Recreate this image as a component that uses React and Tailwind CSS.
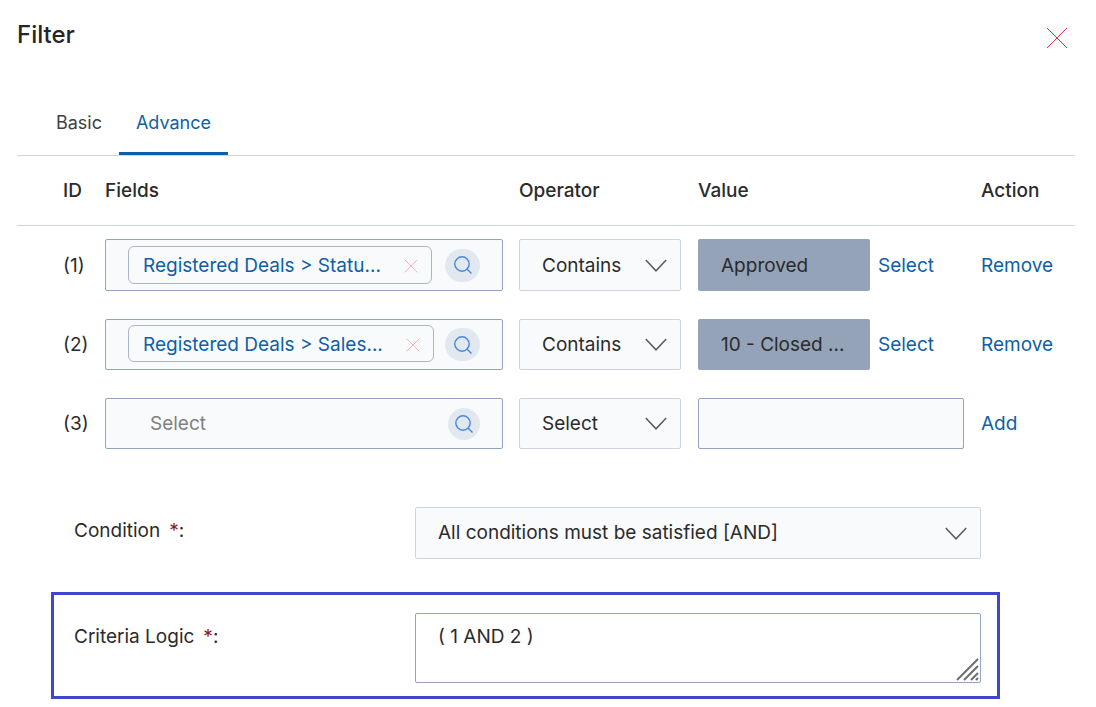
const ROW_GRID = 'grid grid-cols-[88px_414px_179px_283px_1fr] items-center';

const rows = [
  { id: '(1)', field: 'Registered Deals > Statu...', chip: 'w-[304px] h-[38px] pt-[1px]', search: 'ml-[13px]', op: 'Contains', value: 'Approved', height: 'h-[52px]', pad: 'pt-[1px]' },
  { id: '(2)', field: 'Registered Deals > Sales...', chip: 'w-[306px] h-[37px] mb-[2px] pt-[2px]', search: 'ml-[11px]', op: 'Contains', value: '10 - Closed ...', height: 'h-[51px]', pad: '' },
];

function Chevron() {
  return (
    <svg width="22" height="13" viewBox="0 0 22 13" fill="none" stroke="#5a5a5a" strokeWidth="1.5">
      <path d="M.8 1 11 11.8 21.2 1" />
    </svg>
  );
}

function SearchButton({ className }) {
  return (
    <span className={`flex items-center justify-center rounded-full bg-[#e2e8f0] ${className}`}>
      <svg width="20" height="20" viewBox="0 0 20 20" fill="none" stroke="#4a86e0" strokeWidth="1.4">
        <circle cx="9" cy="9" r="7.2" />
        <path d="m14.2 14.2 4.3 4.3" />
      </svg>
    </span>
  );
}

function CloseX({ size, className }) {
  return (
    <svg width={size} height={size} viewBox="0 0 22 22" fill="none" stroke="currentColor" strokeWidth="1" className={className}>
      <path d="M1 1 21 21M21 1 1 21" />
    </svg>
  );
}

function SelectBox({ label, className }) {
  return (
    <div className={`flex items-center justify-between rounded-[2px] border border-[#cbd5e1] bg-[#f8fafc] pl-[22px] pr-[13px] text-[#2b2b2b] ${className}`}>
      <span>{label}</span>
      <Chevron />
    </div>
  );
}

export default function App() {
  return (
    <div className="h-[707px] w-[1096px] overflow-hidden bg-white pl-[17px] font-['Inter',sans-serif] text-[19px] leading-[30px] text-[#2b2b2b]">
      <div className="w-[1058px]">
        <div className="flex h-[69px] items-center justify-between">
          <h1 className="text-[24px] font-medium text-[#262626]">Filter</h1>
          <CloseX size={22} className="mr-[7px] mt-[7px] text-[#d9333f]" />
        </div>

        {/* Tabs */}
        <div className="mt-[21px] flex h-[66px] border-b border-[#cbd5e1] pl-[22px] text-[18px]">
          <div className="flex h-[65px] w-[80px] items-start justify-center pt-[18px] text-[#404040]">Basic</div>
          <div className="flex h-[65px] w-[109px] items-start justify-center border-b-[3px] border-[#0f5fa6] pt-[18px] text-[#0f5fa6]">Advance</div>
        </div>

        {/* Header */}
        <div className={`${ROW_GRID} h-[70px] border-b border-[#cbd5e1] font-medium`}>
          <span className="pl-[46px]">ID</span>
          <span>Fields</span>
          <span>Operator</span>
          <span>Value</span>
          <span>Action</span>
        </div>

        {/* Criteria rows */}
        <div className="mt-[13px] flex flex-col gap-[28px]">
          {rows.map((row) => (
            <div key={row.id} className={`${ROW_GRID} ${row.height}`}>
              <span className={`pl-[46px] ${row.pad}`}>{row.id}</span>
              <div className={`flex w-[398px] items-center rounded-[2px] border border-[#94a3c0] bg-[#f8fafc] pl-[22px] ${row.height}`}>
                <div className={`flex items-center justify-between rounded-[6px] border border-[#a9b6cc] pl-[14px] pr-[13px] text-[#0f5fa6] ${row.chip}`}>
                  <span>{row.field}</span>
                  <CloseX size={14} className="text-[#f08a8a]" />
                </div>
                <SearchButton className={`${row.search} h-[33px] w-[35px]`} />
              </div>
              <SelectBox label={row.op} className={`w-[162px] ${row.height} ${row.pad}`} />
              <div className="flex items-center">
                <div className={`flex w-[172px] items-center rounded-[2px] bg-[#94a3b8] pl-[23px] ${row.height} ${row.pad}`}>{row.value}</div>
                <a className={`ml-[8px] text-[#0f5fa6] ${row.pad}`}>Select</a>
              </div>
              <a className={`text-[#0f5fa6] ${row.pad}`}>Remove</a>
            </div>
          ))}

          <div className={`${ROW_GRID} h-[51px]`}>
            <span className="pl-[46px]">(3)</span>
            <div className="flex h-[51px] w-[398px] items-center justify-between rounded-[2px] border border-[#94a3c0] bg-[#f8fafc] pl-[44px] pr-[22px] text-[#808080]">
              <span>Select</span>
              <SearchButton className="h-[32px] w-[32px]" />
            </div>
            <SelectBox label="Select" className="h-[51px] w-[162px]" />
            <div className="h-[51px] w-[266px] rounded-[2px] border border-[#94a3c0] bg-[#f8fafc]" />
            <a className="text-[#0f5fa6]">Add</a>
          </div>
        </div>

        {/* Condition */}
        <div className="mt-[58px] flex pl-[57px]">
          <div className="w-[341px] pt-[9px]">
            Condition<span className="ml-[9px] text-[#8b1a1a]">*</span>:
          </div>
          <SelectBox label="All conditions must be satisfied [AND]" className="h-[52px] w-[566px]" />
        </div>

        {/* Criteria logic */}
        <div className="ml-[34px] mt-[33px] flex h-[107px] w-[949px] border-[3px] border-[#3f48cc] pl-[20px] pt-[18px]">
          <div className="w-[341px] pt-[9px]">
            Criteria Logic<span className="ml-[9px] text-[#8b1a1a]">*</span>:
          </div>
          <div className="relative h-[70px] w-[566px]">
            <textarea
              readOnly
              value="( 1 AND 2 )"
              className="h-full w-full resize-none rounded-[2px] border border-[#94a3c0] bg-white pl-[22px] pt-[8px] text-[#2b2b2b] outline-none"
            />
            <svg width="24" height="24" viewBox="0 0 24 24" stroke="#6e6e6e" strokeWidth="2" className="absolute bottom-[2px] right-[1px]">
              <path d="M1 23 22 2M8 23 22 9M15 23 22 16M20 23 22 21" />
            </svg>
          </div>
        </div>
      </div>
    </div>
  );
}
